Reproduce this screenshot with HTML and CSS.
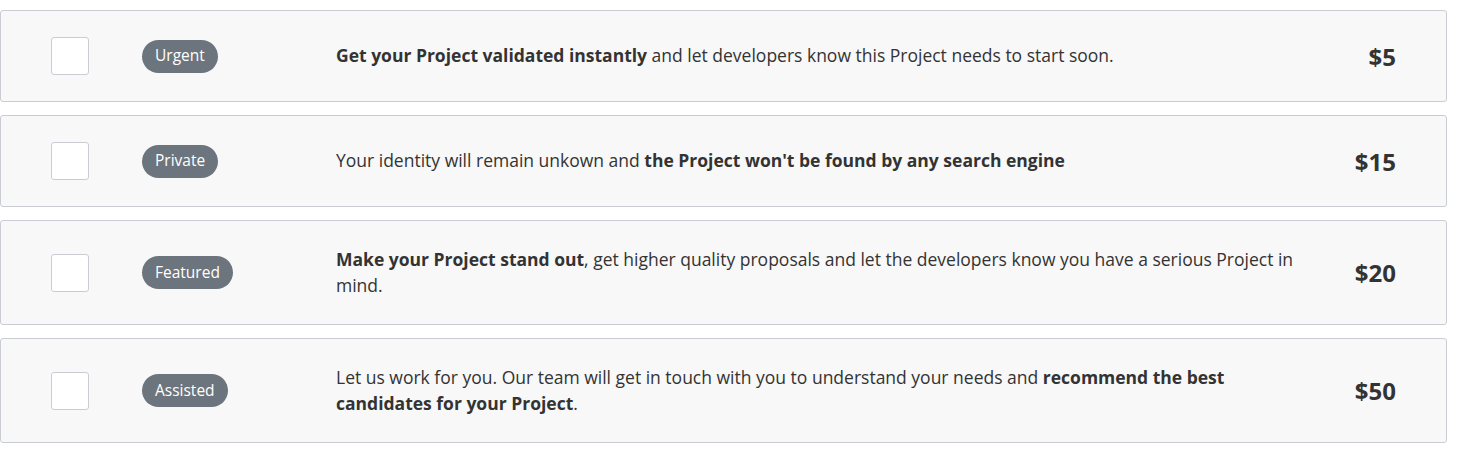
FILE: index.html
```html
<!DOCTYPE html>
<html lang="en">
<head>
<meta charset="utf-8">
<title>Project upgrades</title>
<link rel="stylesheet" href="styles.css">
</head>
<body>
<div class="list">
  <div class="option">
    <div class="check-col"><span class="check"></span></div>
    <div class="badge-col"><span class="badge">Urgent</span></div>
    <div class="desc"><b>Get your Project validated instantly</b> and let developers know this Project needs to start soon.</div>
    <div class="price">$5</div>
  </div>
  <div class="option">
    <div class="check-col"><span class="check"></span></div>
    <div class="badge-col"><span class="badge">Private</span></div>
    <div class="desc">Your identity will remain unkown and <b>the Project won't be found by any search engine</b></div>
    <div class="price">$15</div>
  </div>
  <div class="option">
    <div class="check-col"><span class="check"></span></div>
    <div class="badge-col"><span class="badge">Featured</span></div>
    <div class="desc"><b>Make your Project stand out</b>, get higher quality proposals and let the developers know you have a serious Project in mind.</div>
    <div class="price">$20</div>
  </div>
  <div class="option">
    <div class="check-col"><span class="check"></span></div>
    <div class="badge-col"><span class="badge">Assisted</span></div>
    <div class="desc">Let us work for you. Our team will get in touch with you to understand your needs and <b>recommend the best candidates for your Project</b>.</div>
    <div class="price">$50</div>
  </div>
</div>
</body>
</html>
```
FILE: styles.css
```css
html, body {
  margin: 0;
  padding: 0;
  background: #ffffff;
}
body {
  font-family: "Open Sans", "Liberation Sans", sans-serif;
  color: #333333;
}
.list {
  width: 1447px;
  padding-top: 10px;
  display: flex;
  flex-direction: column;
  gap: 13px;
}
.option {
  display: grid;
  grid-template-columns: 91px 194px 1fr 80px;
  align-items: center;
  padding: 26px 50px 26px 50px;
  background: #f8f8f8;
  border: 1px solid #c9cdd3;
  border-radius: 3px;
  min-height: 38px;
}
.check-col {
  display: flex;
  align-items: center;
}
.check {
  display: block;
  width: 36px;
  height: 36px;
  background: #ffffff;
  border: 1px solid #c9cdd3;
  border-radius: 3px;
}
.badge-col {
  display: flex;
  align-items: center;
}
.badge {
  display: inline-flex;
  align-items: center;
  height: 33px;
  padding: 0 13px;
  border-radius: 17px;
  background: #6c757d;
  color: #ffffff;
  font-size: 15.5px;
  line-height: 1;
}
.desc {
  font-size: 17.5px;
  line-height: 25.5px;
  padding-right: 16px;
}
.desc b {
  font-weight: 700;
}
.price {
  text-align: right;
  font-size: 24px;
  font-weight: 700;
}
```
